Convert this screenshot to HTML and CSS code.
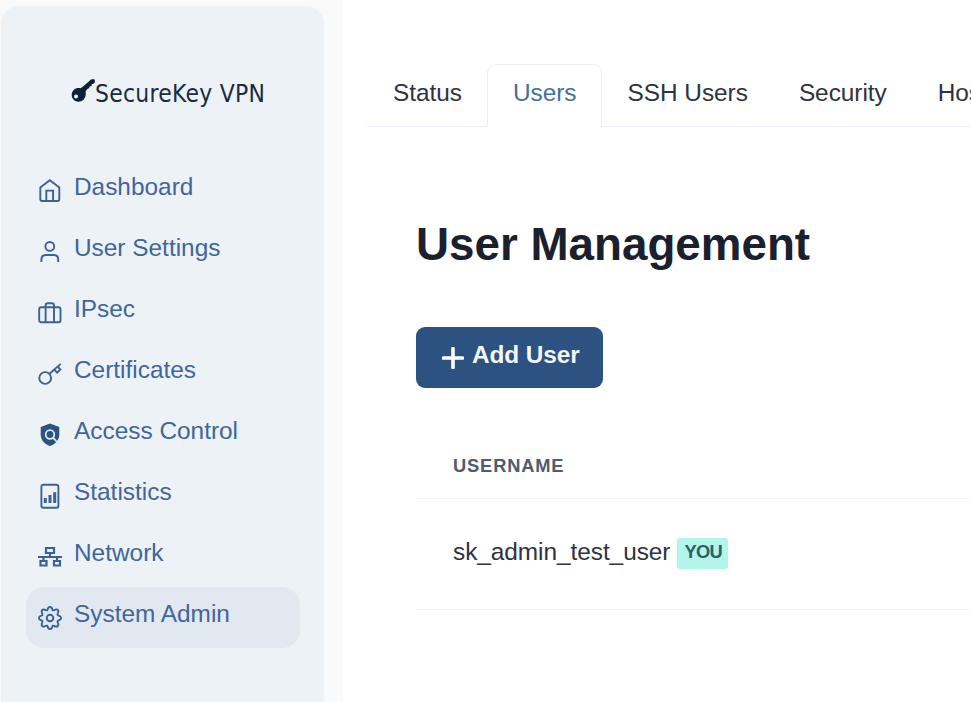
FILE: index.html
```html
<!DOCTYPE html>
<html lang="en">
<head>
<meta charset="utf-8">
<title>SecureKey VPN</title>
<link rel="stylesheet" href="styles.css">
</head>
<body>
<div class="app">
  <aside class="rail">
    <div class="sidebar">
      <div class="brand">
        <svg class="brand-icon" viewBox="0 0 24 24"><path fill-rule="evenodd" d="M19.500.9Q20 .3 20.800.3h2q1 0 1 1v2.200l-1.800 1.400-1 .2-.6 1.800-1.700.5-.7 1.800-1.700.7-1.800 2.900c.9 3-.1 6-2 7.900-2.700 2.600-7.400 2.600-9.900 0-2.600-2.700-2.500-7.200.1-9.700 1.800-1.700 4.300-2.200 6.800-1.700l2.300-1.500zM5 15.500a2 2 0 1 0 0 4 2 2 0 0 0 0-4z"/></svg>
        <span>SecureKey VPN</span>
      </div>
      <nav class="menu">
        <a class="item"><svg class="icon" viewBox="0 0 24 24"><path d="M2.300 8.400 11.800 1.300l9.500 7.100v11.900q0 1.700-1.700 1.700H4q-1.700 0-1.700-1.700zM8.300 22V11.600h6.800V22"/></svg><span>Dashboard</span></a>
        <a class="item"><svg class="icon" viewBox="0 0 24 24"><circle cx="11.800" cy="6.400" r="4.400"/><path d="M3.400 22v-2.500q0-4.500 4.500-4.500h7.800q4.500 0 4.500 4.500V22"/></svg><span>User Settings</span></a>
        <a class="item"><svg class="icon" viewBox="0 0 24 24"><rect x="1.200" y="6.200" width="21.300" height="15" rx="2"/><path d="M7.600 21.200V4.500q0-2.200 2.200-2.200h4Q16 2.300 16 4.500v16.700"/></svg><span>IPsec</span></a>
        <a class="item"><svg class="icon" viewBox="0 0 24 24"><circle cx="7.200" cy="16" r="5.900"/><path d="M11.500 11.700 22.700 1.900M16.200 7.700l2.900 3 3.300-3.200-2.600-2.900"/></svg><span>Certificates</span></a>
        <a class="item"><svg class="icon" viewBox="0 0 24 24"><path class="solid" d="M12 .5 21.300 4.100v7.200c0 5.900-3.900 10-9.300 11.700-5.400-1.700-9.300-5.800-9.300-11.700V4.100z"/><circle class="cut" cx="12" cy="11.500" r="4.300"/><path class="cut" d="m15 14.700 5 5.300"/></svg><span>Access Control</span></a>
        <a class="item"><svg class="icon" viewBox="0 0 24 24"><rect x="3.400" y=".7" width="17" height="23" rx="2"/><path class="bars" d="M7.300 14v5M12 11.100V19M16.700 8.300V19"/></svg><span>Statistics</span></a>
        <a class="item"><svg class="icon" viewBox="0 0 24 24"><path class="thick" d="M8 3h8v5H8zM2.500 16h6v4.500h-6zM16 16h6v4.500h-6zM0 12h24M12 8v4M5.500 12v4M19 12v4"/></svg><span>Network</span></a>
        <a class="item active"><svg class="icon" viewBox="0 0 24 24"><path d="M9.600 3.500Q10.200 1 12 1t2.400 2.500q.3 1.200 1.700.7 2.500-1.500 3.700-.2t-.1 3.600q-.6 1.500.8 2Q23 10.200 23 12t-2.500 2.400q-1.400.5-.8 2 1.300 2.400.1 3.600t-3.700-.2q-1.400-.5-1.700.7Q13.800 23 12 23t-2.400-2.500q-.3-1.200-1.700-.7-2.500 1.500-3.700.2t.1-3.600q.6-1.500-.8-2Q1 13.800 1 12t2.500-2.400q1.400-.5.8-2-1.300-2.400-.1-3.600t3.700.2q1.400.5 1.700-.7z"/><circle cx="12" cy="12" r="3.300"/></svg><span>System Admin</span></a>
      </nav>
    </div>
  </aside>
  <main class="main">
    <div class="tabs">
      <a class="tab">Status</a><a class="tab selected">Users</a><a class="tab">SSH Users</a><a class="tab">Security</a><a class="tab">Hosts</a>
    </div>
    <section class="panel">
      <h1>User Management</h1>
      <button class="add"><svg class="plus" viewBox="0 0 22 22"><path d="M11 1.500v19M1.500 11h19"/></svg><span>Add User</span></button>
      <div class="table">
        <div class="head">Username</div>
        <div class="row"><span>sk_admin_test_user</span><span class="badge">YOU</span></div>
      </div>
    </section>
  </main>
</div>
</body>
</html>
```
FILE: styles.css
```css
* { box-sizing: border-box; }
body {
  margin: 0;
  overflow: hidden;
  background: #fff;
  color: #1a202c;
  font: 24.4px/36px "Liberation Sans", Arial, sans-serif;
}
.app { display: flex; width: 971px; height: 702px; overflow: hidden; }
.rail { flex: none; width: 343px; padding: 6px 19px 0 1px; background: #fafafa; }
.sidebar { height: 720px; padding: 70px 24px 0 25px; border-radius: 18px; background: #edf2f7; }
.brand {
  display: flex;
  align-items: center;
  height: 36px;
  padding-left: 45px;
  color: #1a2b42;
  font-family: "DejaVu Sans Condensed", "DejaVu Sans", sans-serif;
  font-stretch: condensed;
  letter-spacing: .27px;
  white-space: nowrap;
}
.brand-icon { width: 24px; height: 24px; margin-top: -7px; fill: #0b2038; }
.menu { margin-top: 48px; }
.item {
  display: flex;
  align-items: center;
  gap: 12px;
  height: 61px;
  padding-left: 12px;
  border-radius: 18px;
  color: #40669a;
}
.item span { padding-bottom: 8px; white-space: nowrap; }
.item.active { background: #e2e8f0; }
.icon { flex: none; width: 24px; height: 24px; overflow: visible; fill: none; stroke: #3b6294; stroke-width: 1.9; }
.icon .solid { fill: #2c5282; stroke: none; }
.icon .cut { stroke: #dfe7f0; stroke-width: 1.8; }
.icon .bars { stroke-width: 3; }
.icon .thick { stroke-width: 2.200; }
.main { flex: 1; min-width: 0; padding: 64px 0 0 24px; }
.tabs { display: flex; height: 63px; box-shadow: inset 0 -1px #e8edf5; }
.tab {
  flex: none;
  padding: 10px 24.5px 0;
  border: 1px solid transparent;
  color: #2d3340;
  letter-spacing: -.03px;
}
.tab:first-child { padding-left: 25px; }
.tab.selected {
  border-color: #ebf0f7;
  border-bottom-color: #fff;
  border-radius: 9px 9px 0 0;
  background: #fff;
  color: #456f9f;
}
.panel { padding: 88px 0 0 49px; }
h1 { margin: 0; font-size: 45.75px; line-height: 60px; }
.add {
  display: flex;
  align-items: center;
  gap: 8px;
  width: 187px;
  height: 61px;
  margin: 52px 0 0;
  padding: 0 0 0 26px;
  border: 0;
  border-radius: 9px;
  background: #2c5282;
  color: #f4f7fb;
  font: bold 24.4px/36px "Liberation Sans", Arial, sans-serif;
  letter-spacing: -.1px;
}
.add span { padding-bottom: 6px; }
.plus { width: 22px; height: 22px; fill: none; stroke: #fff; stroke-width: 3.600; stroke-linecap: round; }
.table { margin-top: 47px; }
.head {
  height: 64px;
  padding: 13px 37px 0;
  border-bottom: 1px solid #f3f5f8;
  color: #4f5c70;
  font-size: 18.3px;
  font-weight: bold;
  letter-spacing: .85px;
  text-transform: uppercase;
}
.row {
  display: flex;
  align-items: center;
  gap: 7px;
  height: 111px;
  padding-left: 37px;
  border-bottom: 1px solid #f3f6f8;
  color: #2d3340;
}
.row > span:first-child { padding-bottom: 4px; letter-spacing: -.05px; }
.badge {
  height: 31px;
  margin-top: -2px;
  padding: 0 6px 0 7px;
  border-radius: 3px;
  background: #b2f5ea;
  color: #305f62;
  font-size: 18.3px;
  font-weight: bold;
  letter-spacing: -.7px;
  line-height: 27px;
}
```
